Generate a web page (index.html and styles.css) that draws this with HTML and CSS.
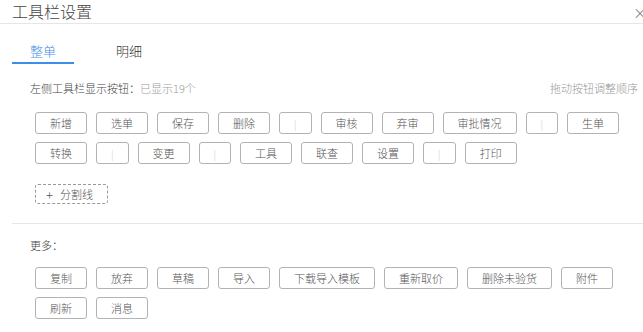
FILE: index.html
```html
<!DOCTYPE html>
<html lang="zh-CN">
<head>
<meta charset="utf-8">
<title>工具栏设置</title>
<link rel="stylesheet" href="styles.css">
</head>
<body>
<div class="dialog">
  <div class="header">
    <span class="title">工具栏设置</span>
    <span class="close">×</span>
  </div>
  <div class="tabs">
    <div class="tab active">整单</div>
    <div class="tab">明细</div>
  </div>
  <div class="section">
    <div class="label-row">
      <span class="label">左侧工具栏显示按钮：<span class="count">已显示19个</span></span>
      <span class="hint">拖动按钮调整顺序</span>
    </div>
    <div class="btns">
      <span class="btn">新增</span>
      <span class="btn">选单</span>
      <span class="btn">保存</span>
      <span class="btn">删除</span>
      <span class="btn sep">|</span>
      <span class="btn">审核</span>
      <span class="btn">弃审</span>
      <span class="btn">审批情况</span>
      <span class="btn sep">|</span>
      <span class="btn">生单</span>
      <span class="btn">转换</span>
      <span class="btn sep">|</span>
      <span class="btn">变更</span>
      <span class="btn sep">|</span>
      <span class="btn">工具</span>
      <span class="btn">联查</span>
      <span class="btn">设置</span>
      <span class="btn sep">|</span>
      <span class="btn">打印</span>
    </div>
    <div class="add-row">
      <span class="add-btn"><span class="plus">+</span>分割线</span>
    </div>
  </div>
  <div class="divider"></div>
  <div class="section more">
    <div class="label-row">
      <span class="label">更多：</span>
    </div>
    <div class="btns">
      <span class="btn">复制</span>
      <span class="btn">放弃</span>
      <span class="btn">草稿</span>
      <span class="btn">导入</span>
      <span class="btn">下载导入模板</span>
      <span class="btn">重新取价</span>
      <span class="btn">删除未验货</span>
      <span class="btn">附件</span>
      <span class="btn">刷新</span>
      <span class="btn">消息</span>
    </div>
  </div>
</div>
</body>
</html>
```
FILE: styles.css
```css
* { box-sizing: border-box; }
html, body { margin: 0; padding: 0; background: #fff; }
body {
  font-family: "Noto Sans CJK SC", "Noto Sans", "Liberation Sans", sans-serif;
  font-weight: 300;
  color: #333;
  overflow: hidden;
  width: 643px;
  height: 332px;
}
.dialog { width: 643px; }
.header {
  height: 24px;
  border-bottom: 1px solid #e6e6e6;
  display: flex;
  align-items: center;
  justify-content: space-between;
  padding-left: 12px;
}
.title {
  font-size: 16px;
  line-height: 22px;
  color: #444;
  margin-top: -2px;
}
.close {
  font-size: 14px;
  color: #666;
  margin-right: -4px;
  line-height: 20px;
}
.tabs {
  display: flex;
  padding-left: 12px;
  margin-top: 16px;
}
.tab {
  width: 62px;
  font-size: 13px;
  line-height: 22px;
  text-align: center;
  color: #333;
  margin-right: 24px;
  border-bottom: 2px solid transparent;
}
.tab.active {
  color: #3d8ee8;
  border-bottom-color: #3d8ee8;
}
.section { padding-left: 30px; padding-right: 5px; }
.label-row {
  display: flex;
  justify-content: space-between;
  align-items: center;
  margin-top: 15px;
  height: 18px;
  font-size: 11px;
}
.label { color: #444; }
.count { color: #999; }
.hint { color: #999; }
.btns {
  display: flex;
  flex-wrap: wrap;
  gap: 8px 9px;
  padding-left: 5px;
  margin-top: 15px;
}
.btn {
  display: inline-flex;
  align-items: center;
  justify-content: center;
  height: 22px;
  padding: 0 14px;
  border: 1px solid #b3b3b3;
  border-radius: 3px;
  font-size: 11px;
  color: #555;
  white-space: nowrap;
}
.btn.sep { color: #ccc; font-size: 10px; }
.add-row { display: flex; padding-left: 5px; margin-top: 20px; }
.add-btn {
  display: inline-flex;
  align-items: center;
  height: 20px;
  width: 73px;
  padding-left: 10px;
  border: 1px dashed #999;
  border-radius: 3px;
  font-size: 11px;
  color: #555;
}
.plus { font-size: 13px; margin-right: 7px; color: #555; }
.divider {
  height: 1px;
  background: #e6e6e6;
  margin-left: 12px;
  margin-top: 19px;
}
.more .label-row { margin-top: 12px; }
.more .btns { margin-top: 13px; }
```
